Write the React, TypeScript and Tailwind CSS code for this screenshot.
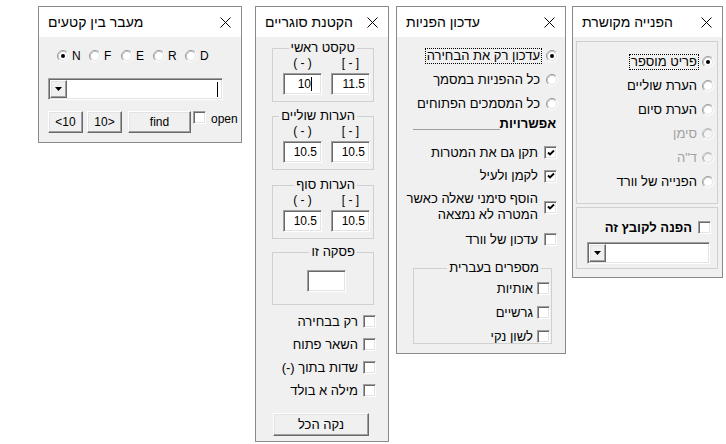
import React from "react";

const SUNKEN =
  "bg-white border border-t-[#a0a0a0] border-l-[#a0a0a0] border-r-white border-b-white shadow-[inset_1px_1px_0_#696969,inset_-1px_-1px_0_#e3e3e3]";
const RAISED =
  "bg-[#f0f0f0] border border-t-white border-l-white border-r-[#696969] border-b-[#696969] shadow-[inset_-1px_-1px_0_#a0a0a0,inset_1px_1px_0_#e3e3e3]";

function CloseX() {
  return (
    <svg width="11" height="11" viewBox="0 0 11 11" className="block shrink-0">
      <path d="M0.5 0.5 L10.5 10.5 M10.5 0.5 L0.5 10.5" stroke="#000" strokeWidth="1" />
    </svg>
  );
}

function Window({ title, cls, children }: { title: string; cls: string; children?: React.ReactNode }) {
  return (
    <div className={`flex flex-col shrink-0 border border-[#8a8a8a] bg-[#f0f0f0] ${cls}`}>
      <div className="h-[30px] shrink-0 bg-white flex items-center justify-between pl-[9px] pr-[10px]">
        <span dir="rtl" className="text-[14px] leading-[16px] text-black">
          {title}
        </span>
        <CloseX />
      </div>
      {children}
    </div>
  );
}

function Radio({ checked, disabled }: { checked?: boolean; disabled?: boolean }) {
  return (
    <svg width="12" height="12" viewBox="0 0 12 12" className="block shrink-0">
      <circle cx="6" cy="6" r="5" fill={disabled ? "#f4f4f4" : "#fff"} />
      <path d="M2.11 9.89 A5.5 5.5 0 0 1 9.89 2.11" stroke={disabled ? "#c0c0c0" : "#9a9a9a"} fill="none" />
      <path d="M9.89 2.11 A5.5 5.5 0 0 1 2.11 9.89" stroke="#ffffff" fill="none" />
      <path d="M2.82 9.18 A4.5 4.5 0 0 1 9.18 2.82" stroke={disabled ? "#b8b8b8" : "#c0c0c0"} fill="none" />
      <path d="M9.18 2.82 A4.5 4.5 0 0 1 2.82 9.18" stroke="#e3e3e3" fill="none" />
      {checked && <circle cx="6" cy="6" r="2" fill="#000" />}
    </svg>
  );
}

function Check({ checked, cls = "" }: { checked?: boolean; cls?: string }) {
  return (
    <span className={`w-[13px] h-[13px] shrink-0 flex items-center justify-center ${SUNKEN} ${cls}`}>
      {checked && (
        <svg width="8" height="8" viewBox="0 0 8 8" className="block">
          <path d="M1 3.5 L3 5.5 L7 1.5" stroke="#000" strokeWidth="1.9" fill="none" />
        </svg>
      )}
    </span>
  );
}

function Btn({ children, cls }: { children: React.ReactNode; cls: string }) {
  return (
    <div className={`flex items-center justify-center text-[12px] text-black ${RAISED} ${cls}`}>{children}</div>
  );
}

function Combo({ cls, caret }: { cls: string; caret?: boolean }) {
  return (
    <div dir="ltr" className={`flex p-[1px] ${SUNKEN} ${cls}`}>
      <div className={`w-[17px] h-full flex items-center justify-center ${RAISED}`}>
        <svg width="7" height="4" viewBox="0 0 7 4" className="block">
          <path d="M0 0 H7 L3.5 4 Z" fill="#000" />
        </svg>
      </div>
      <div className="flex-1 flex items-center justify-end pr-[3px]">
        {caret && <span className="w-px h-[15px] bg-black" />}
      </div>
    </div>
  );
}

function TextBox({ value, caret }: { value: string; caret?: boolean }) {
  return (
    <div className={`w-[39px] h-[22px] flex items-center justify-end text-[12px] ${caret ? "pr-[9px]" : "pr-[4px]"} ${SUNKEN}`}>
      <span className="leading-[14px]">{value}</span>
      {caret && <span className="w-px h-[14px] bg-black" />}
    </div>
  );
}

function PairGroup({ legend, cls, a, b, caret }: { legend: string; cls: string; a: string; b: string; caret?: boolean }) {
  return (
    <fieldset dir="rtl" className={`ml-[16px] w-[102px] border border-[#d0d0d0] pb-[6px] ${cls}`}>
      <legend className="mr-[16px] px-[2px] text-[13px] leading-[14px]">{legend}</legend>
      <div dir="ltr" className="flex gap-[9px] pl-[10px] mt-[1px]">
        <div className="w-[39px] text-center text-[12px] leading-[14px]">( - )</div>
        <div className="w-[39px] text-center text-[12px] leading-[14px]">[ - ]</div>
      </div>
      <div dir="ltr" className="flex gap-[9px] pl-[10px] mt-[3px]">
        <TextBox value={a} caret={caret} />
        <TextBox value={b} />
      </div>
    </fieldset>
  );
}

function CheckRow({ label, checked, cls = "" }: { label: React.ReactNode; checked?: boolean; cls?: string }) {
  return (
    <div dir="rtl" className={`flex items-center ${cls}`}>
      <Check checked={checked} />
      <span className="text-[13px] leading-[16px]">{label}</span>
    </div>
  );
}

function RadioRow({
  label,
  checked,
  disabled,
  focus,
  cls = "",
}: {
  label: string;
  checked?: boolean;
  disabled?: boolean;
  focus?: boolean;
  cls?: string;
}) {
  return (
    <div dir="rtl" className={`flex items-center ${cls}`}>
      <Radio checked={checked} disabled={disabled} />
      <span
        className={`text-[13px] leading-[14px] px-[1px] -mr-[2px] border ${disabled ? "text-[#a0a0a0]" : "text-black"} ${
          focus ? "border-dotted border-black" : "border-transparent"
        }`}
      >
        {label}
      </span>
    </div>
  );
}

export default function App() {
  return (
    <div className="w-[726px] h-[444px] bg-white flex items-start pl-[38px] pt-[6px] font-['Liberation_Sans',Arial,sans-serif] text-black">
      {/* Panel 1 */}
      <Window title="מעבר בין קטעים" cls="w-[204px] h-[137px]">
        <div className="flex flex-col pl-[9px] pt-[11px]">
          <div className="flex items-center h-[16px] pl-[9px]">
            {["N", "F", "E", "R", "D"].map((l, i) => (
              <div key={l} className="w-[32px] flex items-center gap-[3px]">
                <Radio checked={i === 0} />
                <span className="text-[12px] leading-[16px]">{l}</span>
              </div>
            ))}
          </div>
          <Combo cls="mt-[14px] w-[175px] h-[22px]" caret />
          <div className="flex items-start mt-[11px] h-[22px]">
            <Btn cls="w-[35px] h-[22px]">&lt;10</Btn>
            <Btn cls="ml-[4px] w-[35px] h-[22px]">10&gt;</Btn>
            <Btn cls="ml-[6px] w-[63px] h-[22px]">find</Btn>
            <Check cls="ml-[2px]" />
            <span className="ml-[5px] mt-[1px] text-[12px] leading-[14px]">open</span>
          </div>
        </div>
      </Window>

      {/* Panel 2 */}
      <Window title="הקטנת סוגריים" cls="ml-[13px] w-[134px] h-[436px]">
        <div className="flex flex-col">
          <PairGroup legend="טקסט ראשי" cls="mt-[4px]" a="10" b="11.5" caret />
          <PairGroup legend="הערות שוליים" cls="mt-[7px]" a="10.5" b="10.5" />
          <PairGroup legend="הערות סוף" cls="mt-[8px]" a="10.5" b="10.5" />
          <fieldset dir="rtl" className="ml-[16px] mt-[6px] w-[102px] h-[60px] border border-[#d0d0d0]">
            <legend className="mr-[16px] px-[2px] text-[13px] leading-[14px]">פסקה זו</legend>
            <div dir="ltr" className="pl-[34px] mt-[11px]">
              <div className={`w-[39px] h-[22px] ${SUNKEN}`} />
            </div>
          </fieldset>
          <div className="flex flex-col mt-[5px]">
            <CheckRow cls="h-[23px] pr-[12px] gap-[5px]" label="רק בבחירה" />
            <CheckRow cls="h-[23px] pr-[12px] gap-[5px]" label="השאר פתוח" />
            <CheckRow cls="h-[23px] pr-[12px] gap-[5px]" label="שדות בתוך (-)" />
            <CheckRow cls="h-[23px] pr-[12px] gap-[5px]" label="מילה א בולד" />
          </div>
          <Btn cls="ml-[17px] mt-[11px] w-[96px] h-[23px] text-[13px]">נקה הכל</Btn>
        </div>
      </Window>

      {/* Panel 3 */}
      <Window title="עדכון הפניות" cls="ml-[7px] w-[170px] h-[348px]">
        <div className="flex flex-col pt-[7px]">
          <RadioRow cls="h-[24px] pr-[7px] gap-[6px]" label="עדכון רק את הבחירה" checked focus />
          <RadioRow cls="h-[24px] pr-[7px] gap-[6px]" label="כל ההפניות במסמך" />
          <RadioRow cls="h-[24px] pr-[7px] gap-[6px]" label="כל המסמכים הפתוחים" />
          <div dir="rtl" className="flex items-end h-[15px] pr-[9px] pl-[16px]">
            <span className="text-[13px] leading-[15px] font-bold">אפשרויות</span>
            <span className="flex-1 border-b border-[#a0a0a0] mb-[1px]" />
          </div>
          <CheckRow cls="mt-[10px] h-[23px] pr-[8px] gap-[6px]" label="תקן גם את המטרות" checked />
          <CheckRow cls="h-[24px] pr-[8px] gap-[6px]" label="לקמן ולעיל" checked />
          <CheckRow
            cls="mt-[3px] h-[32px] pr-[8px] gap-[6px]"
            label={
              <>
                הוסף סימני שאלה כאשר
                <br />
                המטרה לא נמצאה
              </>
            }
            checked
          />
          <CheckRow cls="mt-[5px] h-[23px] pr-[8px] gap-[6px]" label="עדכון של וורד" />
          <fieldset dir="rtl" className="ml-[16px] mt-[10px] w-[139px] border border-[#d0d0d0]">
            <legend className="mr-[10px] px-[2px] text-[13px] leading-[14px]">מספרים בעברית</legend>
            <div className="flex flex-col mt-[7px] gap-[11px]">
              <CheckRow cls="h-[13px] pr-[1px] gap-[4px]" label="אותיות" />
              <CheckRow cls="h-[13px] pr-[1px] gap-[4px]" label="גרשיים" />
              <CheckRow cls="h-[13px] pr-[1px] gap-[4px]" label="לשון נקי" />
            </div>
          </fieldset>
        </div>
      </Window>

      {/* Panel 4 */}
      <Window title="הפנייה מקושרת" cls="ml-[6px] w-[151px] h-[272px]">
        <div className="flex flex-col pl-[3px] pr-[4px]">
          <div className="mt-[4px] h-[163px] border border-[#d0d0d0] pt-[8px] flex flex-col">
            <RadioRow cls="h-[24px] pr-[3px] gap-[5px]" label="פריט מוספר" checked focus />
            <RadioRow cls="h-[24px] pr-[3px] gap-[5px]" label="הערת שוליים" />
            <RadioRow cls="h-[24px] pr-[3px] gap-[5px]" label="הערת סיום" />
            <RadioRow cls="h-[24px] pr-[3px] gap-[5px]" label="סימן" disabled />
            <RadioRow cls="h-[24px] pr-[3px] gap-[5px]" label='ד"ה' disabled />
            <RadioRow cls="h-[24px] pr-[3px] gap-[5px]" label="הפנייה של וורד" />
          </div>
          <div className="mt-[3px] h-[62px] border border-[#d0d0d0] flex flex-col">
            <div dir="rtl" className="flex items-center h-[13px] mt-[13px] pr-[6px] gap-[6px]">
              <Check />
              <span className="text-[13px] leading-[15px] font-bold">הפנה לקובץ זה</span>
            </div>
            <Combo cls="ml-[10px] mt-[8px] w-[123px] h-[22px]" />
          </div>
        </div>
      </Window>
    </div>
  );
}
